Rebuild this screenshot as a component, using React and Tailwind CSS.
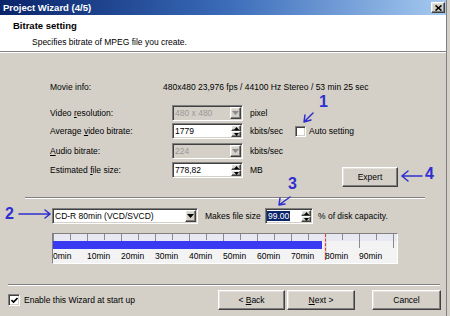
const FONT = "font-['Liberation_Sans',Arial,sans-serif]"
const SUNKEN =
  "border border-t-[#808080] border-l-[#808080] border-b-white border-r-white shadow-[inset_1px_1px_0_#404040,inset_-1px_-1px_0_#d4d0c8]"
const RAISED =
  "border border-t-white border-l-white border-b-[#404040] border-r-[#404040] shadow-[inset_-1px_-1px_0_#808080,inset_1px_1px_0_#e4e2dc]"

function DropBtn({ disabled }) {
  return (
    <div className={`flex h-full w-[11px] items-center justify-center bg-[#d4d0c8] ${RAISED}`}>
      <svg width="7" height="4" viewBox="0 0 7 4">
        <path d="M0 0h7L3.5 4z" fill={disabled ? "#8c8a86" : "#000"} />
      </svg>
    </div>
  )
}

function Combo({ w, text, disabled }) {
  return (
    <div className={`flex h-[16px] items-stretch ${SUNKEN} ${disabled ? "bg-[#d4d0c8]" : "bg-white"}`} style={{ width: w }}>
      <span className={`flex flex-1 items-center whitespace-nowrap px-[2px] ${disabled ? "text-[#9a9894]" : "text-black"}`}>{text}</span>
      <div className="p-[1px]">
        <DropBtn disabled={disabled} />
      </div>
    </div>
  )
}

function Spin({ w, value, selected }) {
  return (
    <div className={`flex h-[16px] items-stretch bg-white ${SUNKEN}`} style={{ width: w }}>
      <span className="flex flex-1 items-center px-[1px]">
        <span className={selected ? "bg-[#0a246a] px-[1px] py-[1px] text-white" : "px-[1px]"}>{value}</span>
      </span>
      <div className="flex w-[11px] flex-col p-[1px] pl-0">
        <div className={`flex flex-1 items-center justify-center bg-[#d4d0c8] ${RAISED}`}>
          <svg width="5" height="3" viewBox="0 0 5 3">
            <path d="M2.5 0L5 3H0z" fill="#000" />
          </svg>
        </div>
        <div className={`flex flex-1 items-center justify-center bg-[#d4d0c8] ${RAISED}`}>
          <svg width="5" height="3" viewBox="0 0 5 3">
            <path d="M0 0h5L2.5 3z" fill="#000" />
          </svg>
        </div>
      </div>
    </div>
  )
}

function Button({ w, children, className = "" }) {
  return (
    <div className={`flex h-[20px] items-center justify-center whitespace-pre bg-[#d4d0c8] ${RAISED} ${className}`} style={{ width: w }}>
      {children}
    </div>
  )
}

function Separator({ className }) {
  return <div className={`h-[2px] border-t border-t-[#808080] border-b border-b-white ${className}`} />
}

const LABELS = ["0min", "10min", "20min", "30min", "40min", "50min", "60min", "70min", "80min", "90min"]

function DiskBar() {
  return (
    <div className="relative ml-[52px] mt-[9px] h-[31px] w-[346px] border border-t-[#808080] border-l-[#808080] border-b-white border-r-white bg-[#f3f3f3]">
      <div className="h-[7px] bg-[#e8e8f3]" />
      <svg className="absolute left-0 top-0" width="344" height="16">
        {Array.from({ length: 21 }).map((_, i) => (
          <line key={i} x1={i * 17 + 0.5} y1="0" x2={i * 17 + 0.5} y2={i % 2 ? 6 : 14} stroke="#8a8a8a" />
        ))}
      </svg>
      <div className="absolute left-0 top-[7px] h-[8px] w-[269px] bg-[#3a3af2]" />
      <div className="absolute left-[271px] top-0 h-[26px] w-[3px] bg-[#e2dede]" />
      <div className="absolute left-[272px] top-0 h-[26px] border-l border-dashed border-l-[#e04040]" />
      {LABELS.map((l, i) => (
        <span key={l} className="absolute top-[17px] leading-[10px]" style={{ left: i * 34 }}>
          {l}
        </span>
      ))}
    </div>
  )
}

export default function App() {
  return (
    <div className={`relative flex h-[316px] w-[450px] overflow-hidden bg-[#d4d0c8] text-[8.5px] leading-none text-black ${FONT}`}>
      <div className="flex w-[447px] flex-col border-r border-r-[#808080]">
        {/* title bar */}
        <div className="flex h-[15px] items-center justify-between bg-linear-to-r from-[#0a246a] via-[#3a6ab8] to-[#a6caf0] pl-[3px] pr-[1px]">
          <span className="text-[9.5px] font-bold text-white">Project Wizard (4/5)</span>
          <div className={`flex h-[11px] w-[14px] items-center justify-center bg-[#d4d0c8] ${RAISED}`}>
            <svg width="7" height="6" viewBox="0 0 7 6">
              <path d="M0.5 0.5L6.5 5.5M6.5 0.5L0.5 5.5" stroke="#000" strokeWidth="1.6" />
            </svg>
          </div>
        </div>
        {/* header */}
        <div className="h-[36px] bg-white pt-[6px]">
          <div className="pl-[13px] text-[9.5px] font-bold">Bitrate setting</div>
          <div className="mt-[7px] pl-[32px]">Specifies bitrate of MPEG file you create.</div>
        </div>
        <Separator className="" />

        {/* body */}
        <div className="flex flex-1 flex-col">
          <div className="mt-[27px] flex h-[14px] items-center pl-[50px]">
            <span className="w-[113px]">Movie info:</span>
            <span className="whitespace-nowrap">480x480 23,976 fps / 44100 Hz Stereo / 53 min 25 sec</span>
          </div>

          <div className="mt-[11px] flex items-center pl-[50px]">
            <span className="w-[122px]">
              Video <u>r</u>esolution:
            </span>
            <Combo w={71} text="480 x 480" disabled />
            <span className="ml-[7px]">pixel</span>
          </div>

          <div className="mt-[2px] flex items-center pl-[50px]">
            <span className="w-[122px]">
              Average <u>v</u>ideo bitrate:
            </span>
            <Spin w={71} value="1779" />
            <span className="ml-[7px] w-[45px]">kbits/sec</span>
            <div className={`h-[11px] w-[11px] bg-white ${SUNKEN}`} />
            <span className="ml-[3px]">Auto setting</span>
          </div>

          <div className="mt-[4px] flex items-center pl-[50px]">
            <span className="w-[122px]">
              <u>A</u>udio bitrate:
            </span>
            <Combo w={71} text="224" disabled />
            <span className="ml-[7px]">kbits/sec</span>
          </div>

          <div className="mt-[3px] flex items-start pl-[50px]">
            <span className="h-[16px] w-[122px] leading-[16px]">
              Estimated <u>f</u>ile size:
            </span>
            <Spin w={71} value="778,82" />
            <span className="ml-[7px] h-[16px] w-[92px] leading-[16px]">MB</span>
            <Button w={56} className="mt-[5px] h-[19px]">
              Expert
            </Button>
          </div>

          <Separator className="ml-[25px] mt-[10px] w-[400px]" />

          <div className="mt-[9px] flex items-center pl-[52px]">
            <Combo w={146} text="CD-R 80min (VCD/SVCD)" />
            <span className="ml-[7px] w-[60px] whitespace-nowrap">Makes file size</span>
            <Spin w={48} value="99.00" selected />
            <span className="ml-[5px] whitespace-nowrap">% of disk capacity.</span>
          </div>

          <DiskBar />

          <Separator className="ml-[8px] mt-[20px] w-[432px]" />

          <div className="mt-[4px] flex items-center">
            <div className={`ml-[8px] flex h-[12px] w-[12px] items-center justify-center bg-white ${SUNKEN}`}>
              <svg width="7" height="7" viewBox="0 0 7 7">
                <path d="M0.5 3L2.5 5L6.5 1" stroke="#000" strokeWidth="1.6" fill="none" />
              </svg>
            </div>
            <span className="ml-[4px] w-[194px] whitespace-nowrap">Enable this Wizard at start up</span>
            <Button w={67}>
              {"< "}
              <u>B</u>ack
            </Button>
            <Button w={68} className="ml-[2px]">
              <u>N</u>
              {"ext >"}
            </Button>
            <Button w={69} className="ml-[17px]">
              Cancel
            </Button>
          </div>
        </div>
      </div>

      {/* hand-drawn annotations */}
      <span className="absolute left-[319px] top-[94px] text-[16px] font-semibold text-[#2f2fd0]">1</span>
      <span className="absolute left-[5px] top-[206px] text-[16px] font-semibold text-[#2f2fd0]">2</span>
      <span className="absolute left-[288px] top-[176px] text-[16px] font-semibold text-[#2f2fd0]">3</span>
      <span className="absolute left-[425px] top-[166px] text-[16px] font-semibold text-[#2f2fd0]">4</span>
      <svg className="pointer-events-none absolute left-0 top-0" width="450" height="316">
        <g stroke="#2f2fd0" strokeWidth="1.5" fill="none" strokeLinecap="round">
          <path d="M313 113L304 122M304 122L305 115M304 122L311 120" />
          <path d="M19 214H50M45 210L50 214L45 218" />
          <path d="M290 197L279 205M279 205L280 198M279 205L285 204" />
          <path d="M422 176H402M408 171L402 176L408 181" />
        </g>
      </svg>
    </div>
  )
}
